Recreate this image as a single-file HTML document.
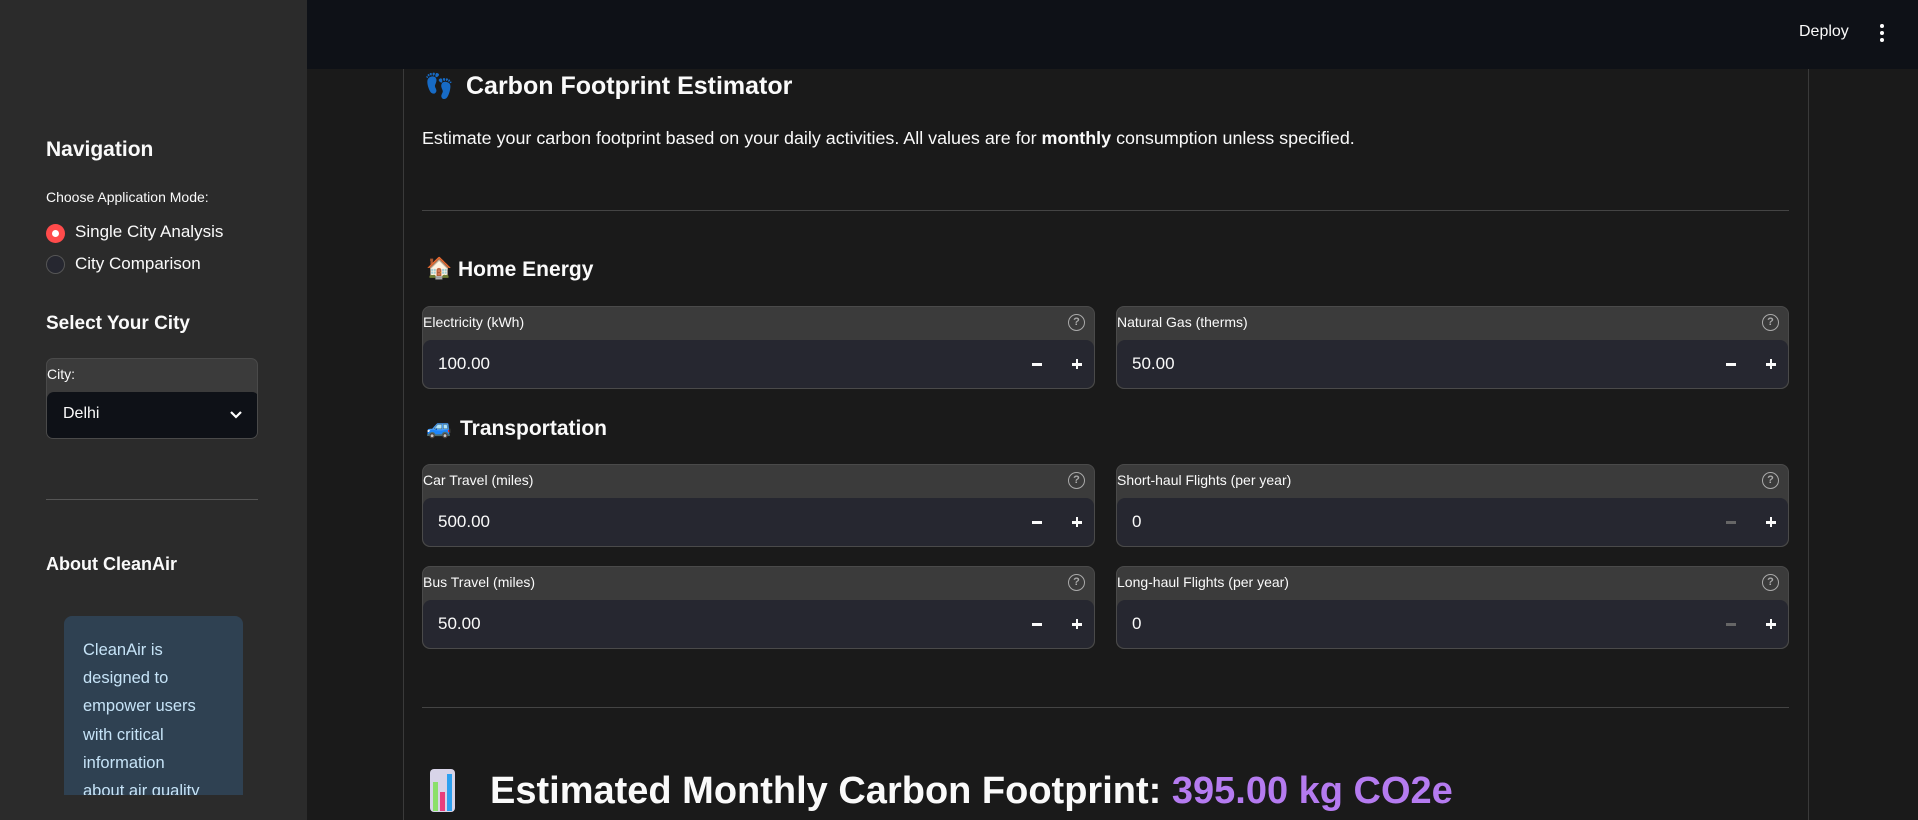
<!DOCTYPE html>
<html><head><meta charset="utf-8"><style>
*{margin:0;padding:0;box-sizing:border-box}
body{width:1918px;height:820px;overflow:hidden;background:#1a1a1a;font-family:"Liberation Sans","Noto Sans CJK SC",sans-serif;color:#fafafa;position:relative}
.abs{position:absolute;white-space:nowrap}
#side{position:absolute;left:0;top:0;width:307px;height:820px;background:#2b2b2b}
#hdr{position:absolute;left:307px;top:0;width:1611px;height:69px;background:#0e1117}
.vl{position:absolute;top:69px;width:1px;height:751px;background:#3a3a3a}
.hr{position:absolute;height:1px;background:#444}
.box{position:absolute;width:673px;height:83px;border:1px solid #4a4a4a;border-radius:8px;background:#3b3b3b;overflow:hidden}
.box .lb{position:absolute;left:0;top:7px;font-size:14px;color:#fafafa}
.box .q{position:absolute;right:9px;top:7px;width:17px;height:17px;border:1.5px solid #aaa;border-radius:50%;font-size:11px;color:#aaa;text-align:center;line-height:14px;font-weight:bold}
.box .in{position:absolute;left:0;right:0;top:33px;bottom:0;background:#262730;border-radius:8px}
.box .v{position:absolute;left:15px;top:14px;font-size:17px}
.box .m{position:absolute;right:52px;top:23px;width:10px;height:2.5px;background:#fafafa}
.box .m.d{background:#666}
.box .p1{position:absolute;right:12px;top:23px;width:10px;height:2.5px;background:#fafafa}
.box .p2{position:absolute;right:15.75px;top:19.25px;width:2.5px;height:10px;background:#fafafa}
h3{position:absolute;font-size:21px;font-weight:bold;white-space:nowrap}
</style></head><body>
<div id="side"></div>
<div id="hdr"></div>
<div class="abs" style="left:1799px;top:23px;font-size:16px;color:#fafafa">Deploy</div>
<div class="abs" style="left:1880px;top:24px;width:4px;height:4px;border-radius:50%;background:#fff"></div>
<div class="abs" style="left:1880px;top:31px;width:4px;height:4px;border-radius:50%;background:#fff"></div>
<div class="abs" style="left:1880px;top:38px;width:4px;height:4px;border-radius:50%;background:#fff"></div>

<!-- sidebar -->
<div class="abs" style="left:46px;top:138px;font-size:21px;font-weight:bold">Navigation</div>
<div class="abs" style="left:46px;top:189px;font-size:14px">Choose Application Mode:</div>
<div class="abs" style="left:46px;top:224px;width:19px;height:19px;border-radius:50%;background:#ff4b4b"></div>
<div class="abs" style="left:52px;top:230px;width:7px;height:7px;border-radius:50%;background:#fff"></div>
<div class="abs" style="left:75px;top:222px;font-size:17px">Single City Analysis</div>
<div class="abs" style="left:46px;top:255px;width:19px;height:19px;border-radius:50%;background:#262730;border:1px solid #555"></div>
<div class="abs" style="left:75px;top:254px;font-size:17px">City Comparison</div>
<div class="abs" style="left:46px;top:313px;font-size:19px;font-weight:bold">Select Your City</div>
<div class="abs" style="left:46px;top:358px;width:212px;height:81px;border:1px solid #4a4a4a;border-radius:7px;background:#3b3b3b;overflow:hidden">
 <div class="abs" style="left:0;top:7px;font-size:14px">City:</div>
 <div class="abs" style="left:0;top:33px;width:212px;height:48px;background:#0e1117;border-radius:7px"></div>
 <div class="abs" style="left:16px;top:46px;font-size:16px">Delhi</div>
 <svg class="abs" style="left:182px;top:51px" width="14" height="10"><path d="M2 2 L7 7 L12 2" stroke="#fff" stroke-width="2.2" fill="none"/></svg>
</div>
<div class="hr" style="left:46px;top:499px;width:212px;background:#555"></div>
<div class="abs" style="left:46px;top:554px;font-size:18px;font-weight:bold">About CleanAir</div>
<div class="abs" style="left:64px;top:616px;width:179px;height:179px;background:#2f4152;border-radius:8px 8px 0 0;overflow:hidden">
 <div style="position:absolute;left:19px;top:20px;font-size:16.5px;line-height:28.2px;color:#c6e3f7;white-space:nowrap">CleanAir is<br>designed to<br>empower users<br>with critical<br>information<br>about air quality</div>
</div>

<!-- main -->
<div class="vl" style="left:403px"></div>
<div class="vl" style="left:1808px"></div>
<div class="abs" style="left:424px;top:72px;font-size:24px">👣</div>
<div class="abs" style="left:466px;top:72px;font-size:25px;font-weight:bold">Carbon Footprint Estimator</div>
<div class="abs" style="left:422px;top:128px;font-size:17.9px">Estimate your carbon footprint based on your daily activities. All values are for <b>monthly</b> consumption unless specified.</div>
<div class="hr" style="left:422px;top:210px;width:1367px"></div>
<div class="abs" style="left:426px;top:257px;font-size:21px">🏠</div>
<h3 style="left:458px;top:258px">Home Energy</h3>

<div class="box" style="left:422px;top:306px"><div class="lb">Electricity (kWh)</div><div class="q">?</div><div class="in"><div class="v">100.00</div><div class="m"></div><div class="p1"></div><div class="p2"></div></div></div>
<div class="box" style="left:1116px;top:306px"><div class="lb">Natural Gas (therms)</div><div class="q">?</div><div class="in"><div class="v">50.00</div><div class="m"></div><div class="p1"></div><div class="p2"></div></div></div>

<div class="abs" style="left:426px;top:416px;font-size:21px">🚙</div>
<h3 style="left:460px;top:417px">Transportation</h3>

<div class="box" style="left:422px;top:464px"><div class="lb">Car Travel (miles)</div><div class="q">?</div><div class="in"><div class="v">500.00</div><div class="m"></div><div class="p1"></div><div class="p2"></div></div></div>
<div class="box" style="left:1116px;top:464px"><div class="lb">Short-haul Flights (per year)</div><div class="q">?</div><div class="in"><div class="v">0</div><div class="m d"></div><div class="p1"></div><div class="p2"></div></div></div>
<div class="box" style="left:422px;top:566px"><div class="lb">Bus Travel (miles)</div><div class="q">?</div><div class="in"><div class="v">50.00</div><div class="m"></div><div class="p1"></div><div class="p2"></div></div></div>
<div class="box" style="left:1116px;top:566px"><div class="lb">Long-haul Flights (per year)</div><div class="q">?</div><div class="in"><div class="v">0</div><div class="m d"></div><div class="p1"></div><div class="p2"></div></div></div>

<div class="hr" style="left:422px;top:707px;width:1367px"></div>
<div class="abs" style="left:430px;top:769px;width:25px;height:43px;background:#d8d4e8;border-radius:4px"></div>
<div class="abs" style="left:433px;top:782px;width:5px;height:29px;background:#8be06a"></div>
<div class="abs" style="left:440px;top:792px;width:5px;height:19px;background:#e83e7c"></div>
<div class="abs" style="left:447px;top:774px;width:5px;height:37px;background:#2ea0f0"></div>
<div class="abs" style="left:490px;top:770px;font-size:38px;font-weight:bold">Estimated Monthly Carbon Footprint: <span style="color:#b57bf0">395.00 kg CO2e</span></div>
</body></html>
